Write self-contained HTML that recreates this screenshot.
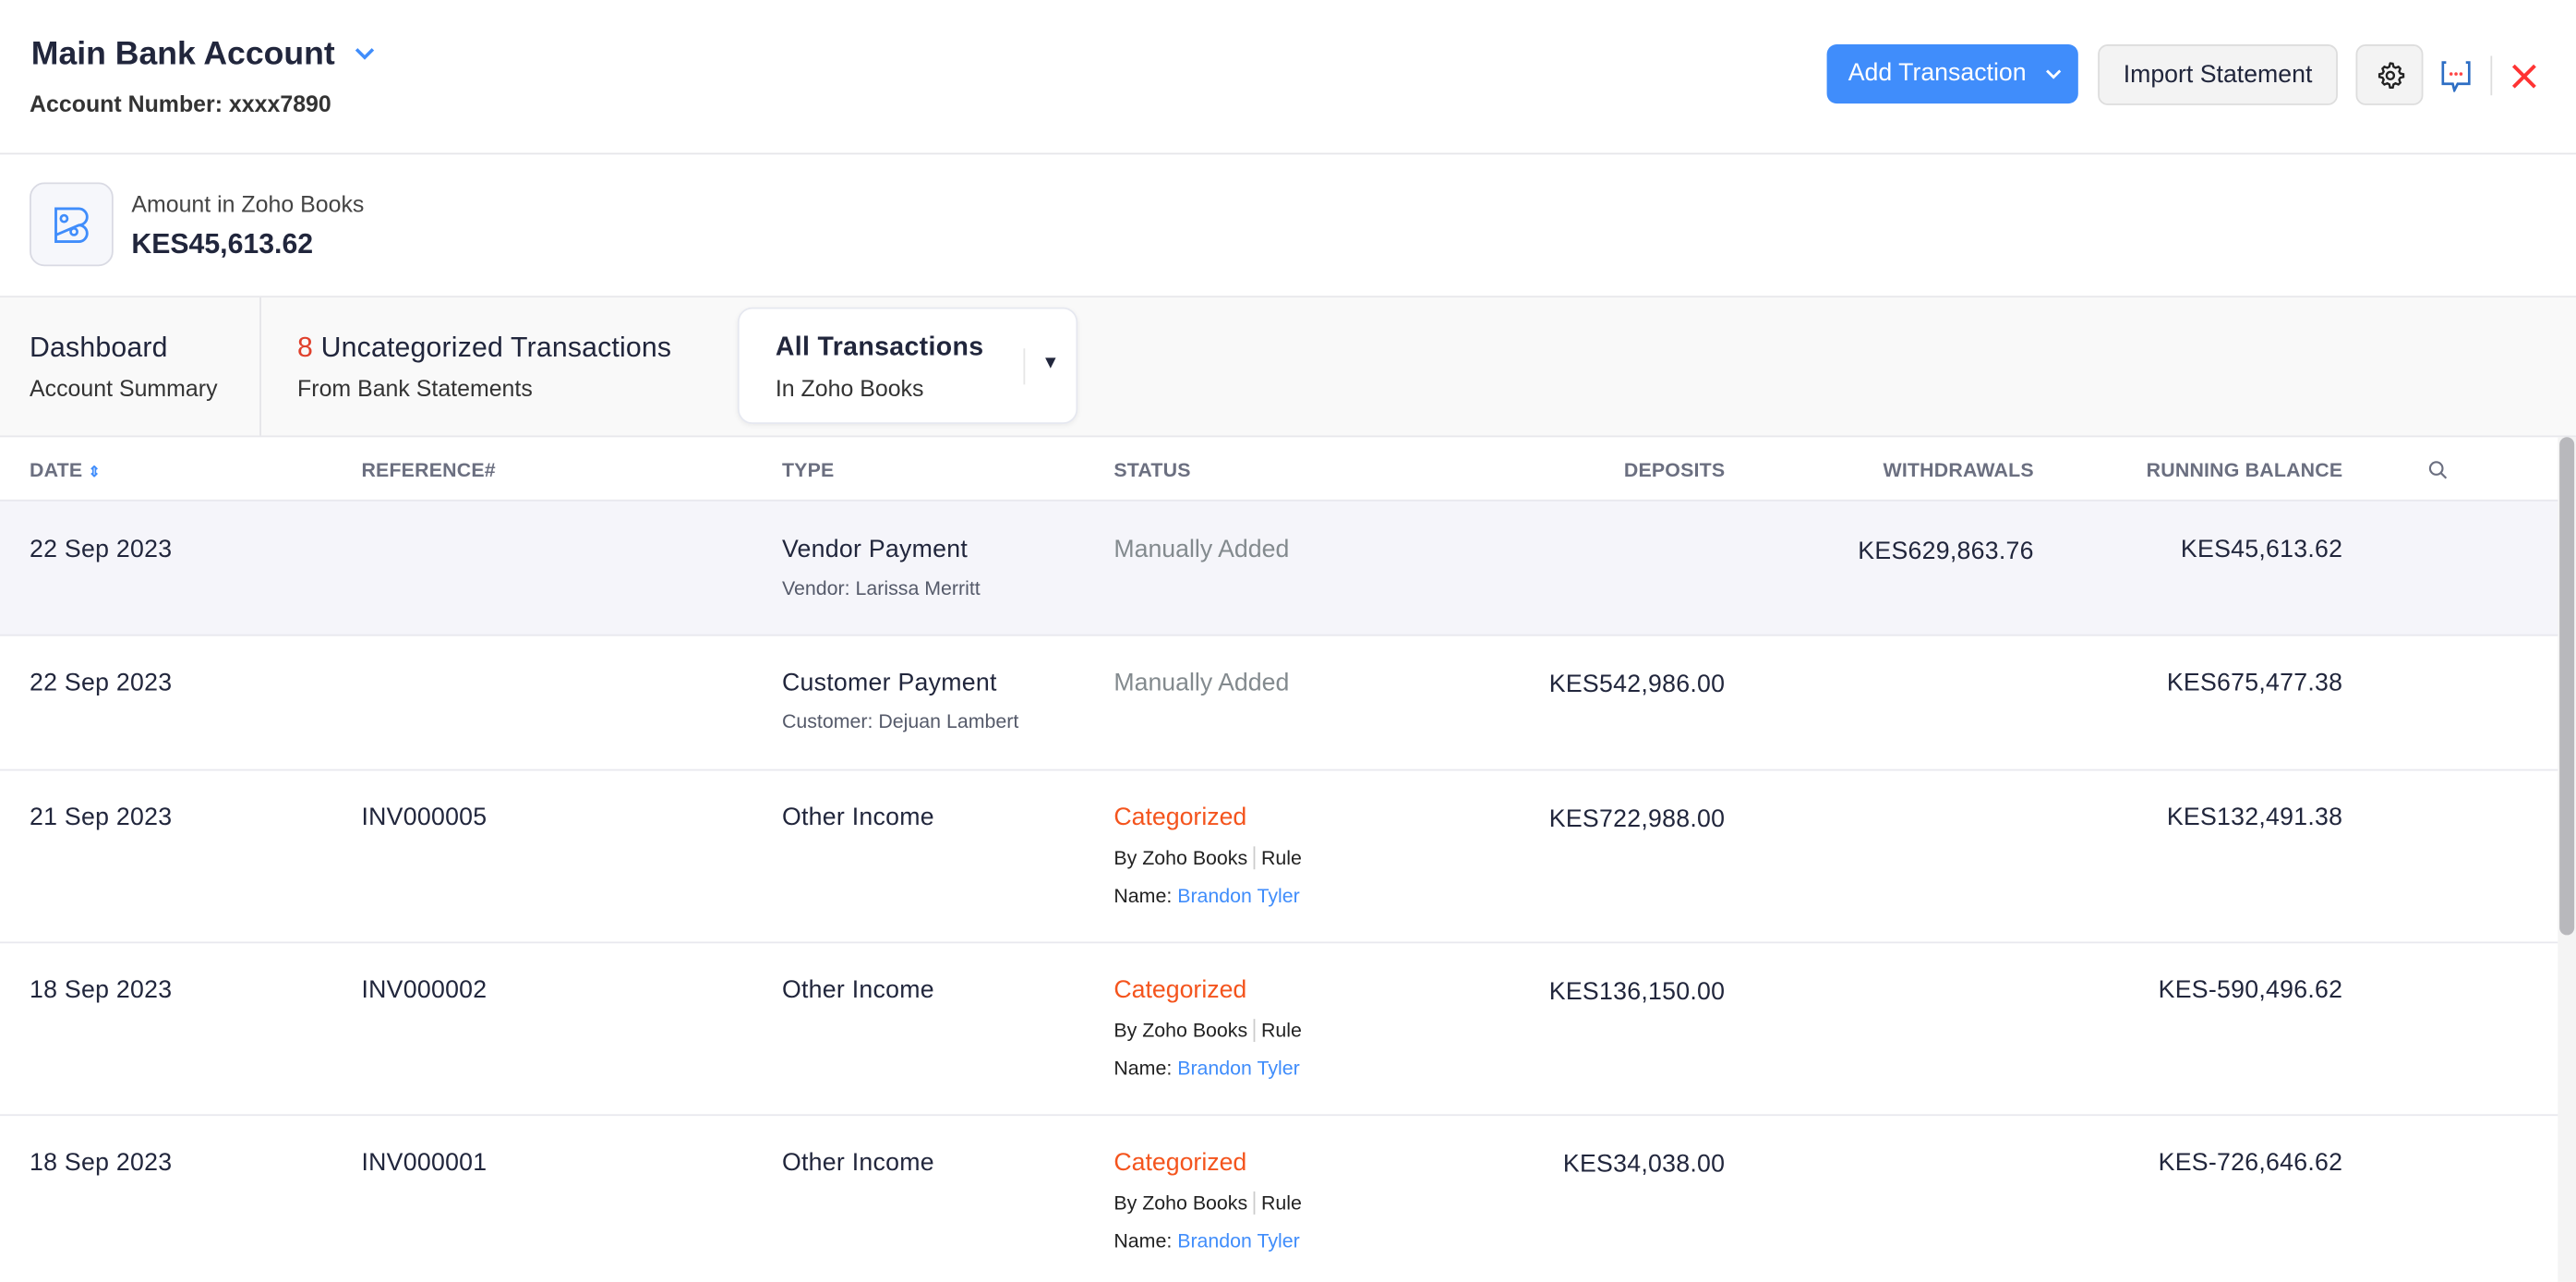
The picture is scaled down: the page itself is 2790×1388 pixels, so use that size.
<!DOCTYPE html>
<html><head><meta charset="utf-8"><style>
*{box-sizing:border-box;margin:0;padding:0}
html,body{width:2790px;height:1388px;overflow:hidden;background:#fff}
#w{width:1568px;height:780px;transform:scale(1.7793);transform-origin:0 0;position:relative;font-family:"Liberation Sans",sans-serif;color:#21263c}
.a{position:absolute;white-space:nowrap}
.r{text-align:right}
.hd{font-size:12px;color:#6b6f80;font-weight:bold;top:279px;letter-spacing:.1px}
.m{font-size:15px;letter-spacing:.15px}
.s{font-size:12px;color:#555a6a}
.cat{color:#f4541d;font-size:15px}
.man{color:#838a8e;font-size:15px}
.bl{color:#408dfb}
.t{font-size:17px;letter-spacing:.1px}
</style></head><body><div id="w">
<div class="a" style="left:19px;top:22px;font-size:20px;font-weight:bold">Main Bank Account</div>
<svg class="a" style="left:215px;top:28px" width="14" height="10" viewBox="0 0 14 10"><path d="M2 2l5 5 5-5" stroke="#408dfb" stroke-width="2" fill="none"/></svg>
<div class="a" style="left:18px;top:55px;font-size:14px;font-weight:bold;color:#333">Account Number: xxxx7890</div>
<div class="a" style="left:1112px;top:27px;width:153px;height:36px;background:#408dfb;border-radius:6px;color:#fff;font-size:15px;line-height:36px;padding-left:13px">Add Transaction<svg style="position:absolute;left:133px;top:15px" width="10" height="7" viewBox="0 0 10 7"><path d="M1 1l4 4 4-4" stroke="#fff" stroke-width="1.6" fill="none"/></svg></div>
<div class="a" style="left:1277px;top:27px;width:146px;height:37px;background:#f3f3f3;border:1px solid #ddd;border-radius:6px;font-size:15px;line-height:35px;text-align:center">Import Statement</div>
<div class="a" style="left:1434px;top:27px;width:41px;height:37px;background:#f3f3f3;border:1px solid #ddd;border-radius:6px"><svg style="position:absolute;left:11px;top:9px" width="18" height="18" viewBox="0 0 24 24"><path d="M12 2l2 .3.6 2.5 1.6.9 2.4-.9 1.5 1.5-.9 2.4.9 1.6 2.5.6v2.2l-2.5.6-.9 1.6.9 2.4-1.5 1.5-2.4-.9-1.6.9-.6 2.5h-2.200l-.6-2.5-1.6-.9-2.4.9-1.5-1.5.9-2.4-.9-1.6-2.5-.6v-2.2l2.5-.6.9-1.6-.9-2.4 1.5-1.5 2.4.9 1.6-.9.6-2.5z" stroke="#222" stroke-width="1.8" fill="none"/><circle cx="12" cy="12" r="3" stroke="#222" stroke-width="1.8" fill="none"/></svg></div>
<svg class="a" style="left:1485px;top:36px" width="20" height="20" viewBox="0 0 20 20"><path d="M4 2H2v13h6l1 4 2-4h7V2h-2" stroke="#2d6ec4" stroke-width="1.5" fill="none"/><circle cx="7" cy="9" r="1" fill="#f44"/><circle cx="10" cy="9" r="1" fill="#f44"/><circle cx="13" cy="9" r="1" fill="#f44"/></svg>
<div class="a" style="left:1516px;top:34px;width:1px;height:24px;background:#ddd"></div>
<svg class="a" style="left:1528px;top:38px" width="17" height="17" viewBox="0 0 17 17"><path d="M2 2l13 13M15 2L2 15" stroke="#f33" stroke-width="2.2"/></svg>
<div class="a" style="left:0;top:93px;width:1568px;height:1px;background:#e6e6ea"></div>
<div class="a" style="left:18px;top:111px;width:51px;height:51px;background:#f6f7fb;border:1px solid #d9dae3;border-radius:9px"><svg style="position:absolute;left:13px;top:12px" width="24" height="25" viewBox="0 0 24 25"><path d="M2 3h14a5 5 0 0 1 0 10L2 19zM2 3v20h14a5 5 0 0 0 0-10" stroke="#408dfb" stroke-width="1.6" fill="none"/><circle cx="7" cy="9" r="2" stroke="#408dfb" stroke-width="1.5" fill="none"/><circle cx="13" cy="17" r="2" stroke="#408dfb" stroke-width="1.5" fill="none"/></svg></div>
<div class="a" style="left:80px;top:116px;font-size:14px;color:#444">Amount in Zoho Books</div>
<div class="a" style="left:80px;top:139px;font-size:17px;font-weight:bold">KES45,613.62</div>
<div class="a" style="left:0;top:180px;width:1568px;height:86px;background:#f9f9f9;border-top:1px solid #e8e8ec;border-bottom:1px solid #e8e8ec"></div>
<div class="a" style="left:158px;top:181px;width:1px;height:84px;background:#e4e4e8"></div>
<div class="a t" style="left:18px;top:202px">Dashboard</div>
<div class="a" style="left:18px;top:228px;font-size:14px;color:#333">Account Summary</div>
<div class="a t" style="left:181px;top:202px"><span style="color:#e0402c">8</span> Uncategorized Transactions</div>
<div class="a" style="left:181px;top:228px;font-size:14px;color:#333">From Bank Statements</div>
<div class="a" style="left:449px;top:187px;width:207px;height:71px;background:#fff;border:1px solid #e6e8f0;border-radius:9px;box-shadow:0 1px 3px rgba(0,0,0,.06)"></div>
<div class="a" style="left:472px;top:203px;font-size:16px;font-weight:bold;letter-spacing:.2px">All Transactions</div>
<div class="a" style="left:472px;top:228px;font-size:14px;color:#333">In Zoho Books</div>
<div class="a" style="left:623px;top:212px;width:1px;height:22px;background:#e6e6e6"></div>
<div class="a" style="left:634px;top:215px;font-size:11px">▼</div>
<div class="a hd" style="left:18px">DATE <span style="color:#408dfb;font-size:9px">⇕</span></div>
<div class="a hd" style="left:220px">REFERENCE#</div>
<div class="a hd" style="left:476px">TYPE</div>
<div class="a hd" style="left:678px">STATUS</div>
<div class="a hd r" style="right:518px">DEPOSITS</div>
<div class="a hd r" style="right:330px">WITHDRAWALS</div>
<div class="a hd r" style="right:142px">RUNNING BALANCE</div>
<svg class="a" style="left:1478px;top:280px" width="12" height="12" viewBox="0 0 12 12"><circle cx="5" cy="5" r="3.8" stroke="#6b6f80" stroke-width="1.2" fill="none"/><path d="M8 8l3 3" stroke="#6b6f80" stroke-width="1.2"/></svg>
<div class="a" style="left:0;top:304px;width:1557px;height:83px;background:#f5f5fa;border-top:1px solid #e8e8ee;border-bottom:1px solid #e8e8ee"></div>
<div class="a" style="left:0;top:468px;width:1557px;height:1px;background:#e8e8ee"></div>
<div class="a" style="left:0;top:573px;width:1557px;height:1px;background:#e8e8ee"></div>
<div class="a" style="left:0;top:678px;width:1557px;height:1px;background:#e8e8ee"></div>

<div class="a m" style="left:18px;top:326px">22 Sep 2023</div>
<div class="a m" style="left:476px;top:326px">Vendor Payment</div>
<div class="a s" style="left:476px;top:351px">Vendor: Larissa Merritt</div>
<div class="a man" style="left:678px;top:326px">Manually Added</div>
<div class="a m r" style="right:330px;top:327px">KES629,863.76</div>
<div class="a m r" style="right:142px;top:326px">KES45,613.62</div>

<div class="a m" style="left:18px;top:407px">22 Sep 2023</div>
<div class="a m" style="left:476px;top:407px">Customer Payment</div>
<div class="a s" style="left:476px;top:432px">Customer: Dejuan Lambert</div>
<div class="a man" style="left:678px;top:407px">Manually Added</div>
<div class="a m r" style="right:518px;top:408px">KES542,986.00</div>
<div class="a m r" style="right:142px;top:407px">KES675,477.38</div>

<div class="a m" style="left:18px;top:489px">21 Sep 2023</div>
<div class="a m" style="left:220px;top:489px">INV000005</div>
<div class="a m" style="left:476px;top:489px">Other Income</div>
<div class="a cat" style="left:678px;top:489px">Categorized</div>
<div class="a s" style="left:678px;top:515px;color:#222">By Zoho Books <span style="border-left:1px solid #ccc;padding-left:4px">Rule</span></div>
<div class="a s" style="left:678px;top:538px;color:#222">Name: <span class="bl">Brandon Tyler</span></div>
<div class="a m r" style="right:518px;top:490px">KES722,988.00</div>
<div class="a m r" style="right:142px;top:489px">KES132,491.38</div>

<div class="a m" style="left:18px;top:594px">18 Sep 2023</div>
<div class="a m" style="left:220px;top:594px">INV000002</div>
<div class="a m" style="left:476px;top:594px">Other Income</div>
<div class="a cat" style="left:678px;top:594px">Categorized</div>
<div class="a s" style="left:678px;top:620px;color:#222">By Zoho Books <span style="border-left:1px solid #ccc;padding-left:4px">Rule</span></div>
<div class="a s" style="left:678px;top:643px;color:#222">Name: <span class="bl">Brandon Tyler</span></div>
<div class="a m r" style="right:518px;top:595px">KES136,150.00</div>
<div class="a m r" style="right:142px;top:594px">KES-590,496.62</div>

<div class="a m" style="left:18px;top:699px">18 Sep 2023</div>
<div class="a m" style="left:220px;top:699px">INV000001</div>
<div class="a m" style="left:476px;top:699px">Other Income</div>
<div class="a cat" style="left:678px;top:699px">Categorized</div>
<div class="a s" style="left:678px;top:725px;color:#222">By Zoho Books <span style="border-left:1px solid #ccc;padding-left:4px">Rule</span></div>
<div class="a s" style="left:678px;top:748px;color:#222">Name: <span class="bl">Brandon Tyler</span></div>
<div class="a m r" style="right:518px;top:700px">KES34,038.00</div>
<div class="a m r" style="right:142px;top:699px">KES-726,646.62</div>

<div class="a" style="left:1557px;top:266px;width:11px;height:514px;background:#f4f4f4"></div>
<div class="a" style="left:1558px;top:266px;width:9px;height:303px;background:#b8b8bc;border-radius:5px"></div>
</div></body></html>
